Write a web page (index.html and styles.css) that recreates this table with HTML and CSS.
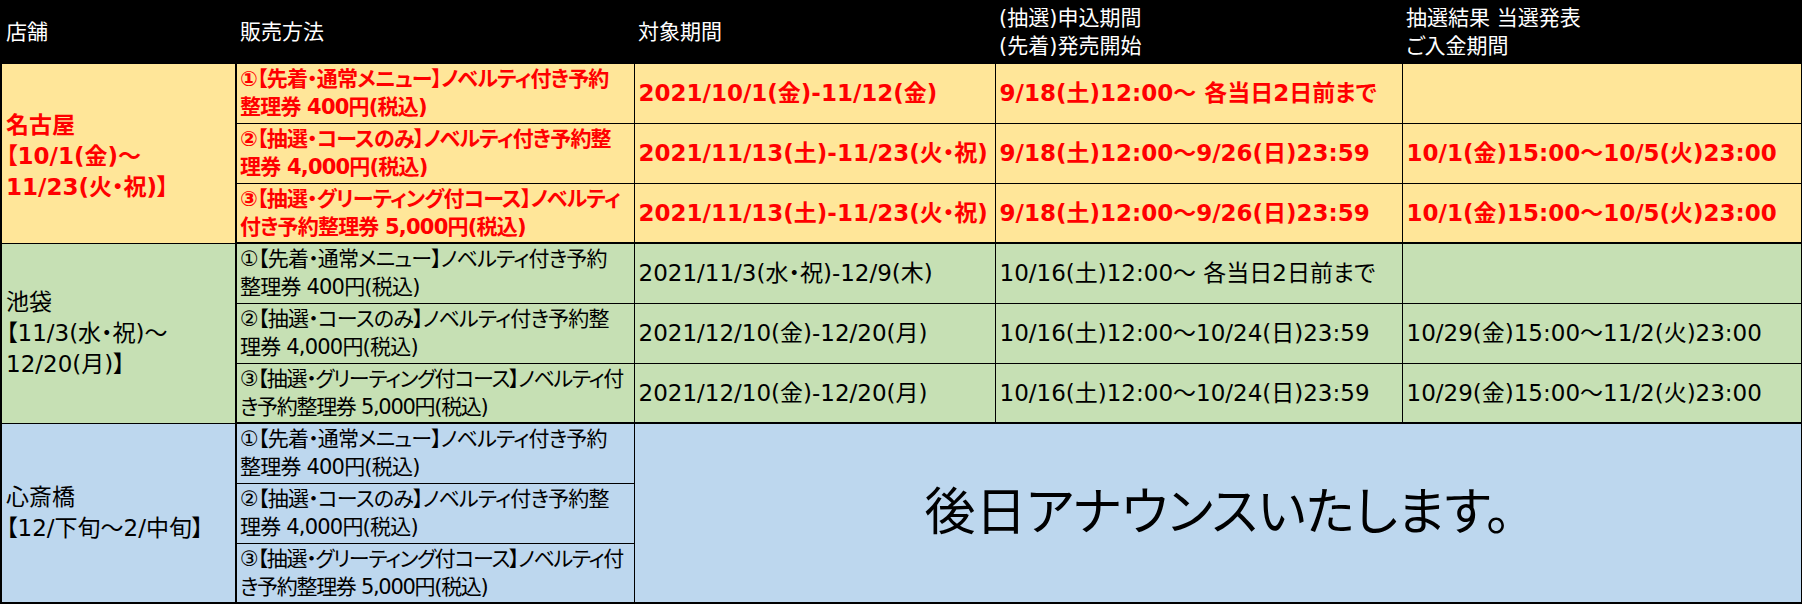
FILE: index.html
```html
<!DOCTYPE html>
<html lang="ja">
<head>
<meta charset="utf-8">
<title>販売スケジュール</title>
<link rel="stylesheet" href="styles.css">
</head>
<body>
<table class="sched">
  <colgroup>
    <col class="c-store"><col class="c-method"><col class="c-period"><col class="c-apply"><col class="c-result">
  </colgroup>
  <thead>
    <tr class="head">
      <th>店舗</th>
      <th>販売方法</th>
      <th>対象期間</th>
      <th>(抽選)申込期間<br>(先着)発売開始</th>
      <th>抽選結果 当選発表<br>ご入金期間</th>
    </tr>
  </thead>
  <tbody class="nagoya">
    <tr>
      <td class="store first" rowspan="3">名古屋<br>【10/1(金)～<br>11/23(火・祝)】</td>
      <td class="method">①【先着・通常メニュー】ノベルティ付き予約<br>整理券 400円(税込)</td>
      <td>2021/10/1(金)-11/12(金)</td>
      <td>9/18(土)12:00～ 各当日2日前まで</td>
      <td></td>
    </tr>
    <tr>
      <td class="method">②【抽選・コースのみ】ノベルティ付き予約整<br>理券 4,000円(税込)</td>
      <td>2021/11/13(土)-11/23(火・祝)</td>
      <td>9/18(土)12:00～9/26(日)23:59</td>
      <td>10/1(金)15:00～10/5(火)23:00</td>
    </tr>
    <tr class="last">
      <td class="method">③【抽選・グリーティング付コース】ノベルティ<br>付き予約整理券 5,000円(税込)</td>
      <td>2021/11/13(土)-11/23(火・祝)</td>
      <td>9/18(土)12:00～9/26(日)23:59</td>
      <td>10/1(金)15:00～10/5(火)23:00</td>
    </tr>
  </tbody>
  <tbody class="ikebukuro">
    <tr>
      <td class="store" rowspan="3">池袋<br>【11/3(水・祝)～<br>12/20(月)】</td>
      <td class="method">①【先着・通常メニュー】ノベルティ付き予約<br>整理券 400円(税込)</td>
      <td>2021/11/3(水・祝)-12/9(木)</td>
      <td>10/16(土)12:00～ 各当日2日前まで</td>
      <td></td>
    </tr>
    <tr>
      <td class="method">②【抽選・コースのみ】ノベルティ付き予約整<br>理券 4,000円(税込)</td>
      <td>2021/12/10(金)-12/20(月)</td>
      <td>10/16(土)12:00～10/24(日)23:59</td>
      <td>10/29(金)15:00～11/2(火)23:00</td>
    </tr>
    <tr class="last">
      <td class="method tight">③【抽選・グリーティング付コース】ノベルティ付<br>き予約整理券 5,000円(税込)</td>
      <td>2021/12/10(金)-12/20(月)</td>
      <td>10/16(土)12:00～10/24(日)23:59</td>
      <td>10/29(金)15:00～11/2(火)23:00</td>
    </tr>
  </tbody>
  <tbody class="shinsaibashi">
    <tr>
      <td class="store" rowspan="3">心斎橋<br>【12/下旬～2/中旬】</td>
      <td class="method">①【先着・通常メニュー】ノベルティ付き予約<br>整理券 400円(税込)</td>
      <td class="announce" rowspan="3" colspan="3">後日アナウンスいたします。</td>
    </tr>
    <tr>
      <td class="method">②【抽選・コースのみ】ノベルティ付き予約整<br>理券 4,000円(税込)</td>
    </tr>
    <tr class="last">
      <td class="method tight">③【抽選・グリーティング付コース】ノベルティ付<br>き予約整理券 5,000円(税込)</td>
    </tr>
  </tbody>
</table>
</body>
</html>
```

FILE: styles.css
```css
html, body {
  margin: 0;
  padding: 0;
  background: #ffffff;
}

body {
  font-family: "DejaVu Sans", "Noto Sans CJK JP", sans-serif;
  font-feature-settings: "palt";
  font-size: 21px;
  color: #000000;
}

.sched {
  border-collapse: collapse;
  table-layout: fixed;
  width: 1801px;
  border: 2px solid #000;
}

.c-store { width: 235px; }
.c-method { width: 398px; }
.c-period { width: 361px; }
.c-apply { width: 407px; }
.c-result { width: 400px; }

.head {
  height: 62px;
  background: #000;
  color: #fff;
}

.head th {
  font-weight: normal;
  font-size: 21px;
  text-align: left;
  vertical-align: middle;
  padding: 0 4px;
  line-height: 28px;
  border: none;
}

td {
  height: 60px;
  padding: 0 4px;
  border: 1px solid #000;
  vertical-align: middle;
  white-space: nowrap;
  font-size: 23px;
  line-height: 28px;
  box-sizing: border-box;
}

td.method {
  font-size: 21px;
  letter-spacing: -0.8px;
  padding-left: 3px;
}

td.method.tight {
  letter-spacing: -1.3px;
}

td.store {
  border-right: 2px solid #000;
  line-height: 31px;
}

td.store.first {
  padding-top: 6px;
}

tr.last td {
  border-bottom: 2px solid #000;
}

.nagoya td {
  background: #ffe699;
  color: #ff0000;
  font-weight: bold;
}

.ikebukuro td {
  background: #c6e0b4;
}

.shinsaibashi td {
  background: #bdd7ee;
}

td.announce {
  text-align: center;
  font-size: 51px;
  border-bottom: 2px solid #000;
}
```
